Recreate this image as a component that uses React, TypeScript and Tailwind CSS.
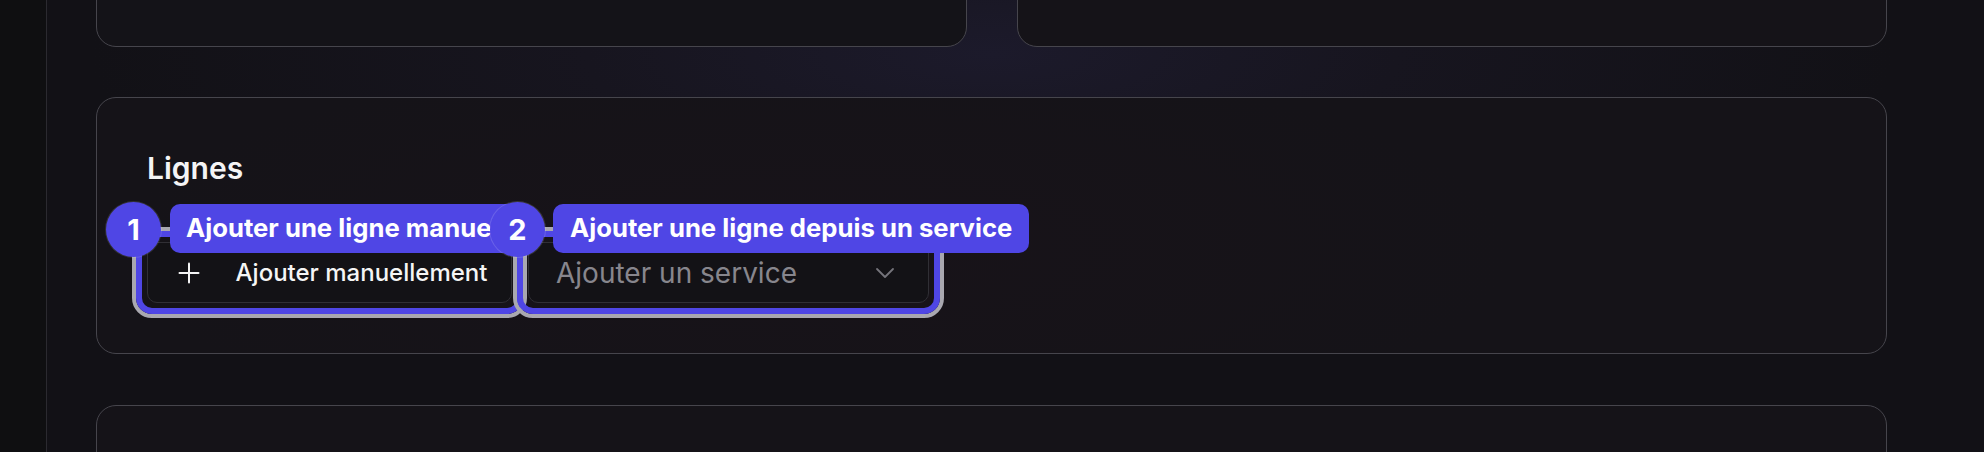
import React from "react";

function Plus() {
  return (
    <svg width="22" height="22" viewBox="0 0 22 22" fill="none" stroke="#f4f4f5" strokeWidth="2" strokeLinecap="round">
      <line x1="11" y1="1.5" x2="11" y2="20.5" />
      <line x1="1.5" y1="11" x2="20.5" y2="11" />
    </svg>
  );
}

function Chevron() {
  return (
    <svg width="20" height="12" viewBox="0 0 20 12" fill="none" stroke="#75747b" strokeWidth="1.8" strokeLinecap="round" strokeLinejoin="round">
      <polyline points="2,2 10,10 18,2" />
    </svg>
  );
}

function Highlight() {
  return (
    <div className="pointer-events-none absolute -inset-[15px] rounded-[20px] border-[4px] border-[#a9a8b0]">
      <div className="h-full w-full rounded-[16px] border-[6px] border-[#4f46e5]" />
    </div>
  );
}

export default function App() {
  return (
    <div className="relative flex h-[452px] w-full overflow-hidden bg-[#111014] bg-[radial-gradient(ellipse_900px_260px_at_50%_12%,#1c1a2b_0%,#17151f_45%,#121116_100%)] font-['Inter','Noto_Sans',sans-serif]">
      <aside className="h-full w-[47px] shrink-0 border-r border-[#2b2a30] bg-[#0f0f11]" />
      <main className="flex-1 pl-[49px] pr-[97px]">
        <div className="-mt-[153px] grid grid-cols-2 gap-[50px]">
          <div className="h-[200px] rounded-[20px] border border-[#46454c] bg-[#141318]" />
          <div className="h-[200px] rounded-[20px] border border-[#46454c] bg-[#151318]" />
        </div>

        <section className="mt-[50px] rounded-[20px] border border-[#46454c] bg-[#151318] bg-[radial-gradient(ellipse_700px_200px_at_40%_60%,#181319_0%,#151318_100%)] p-[50px]">
          <h2 className="text-[30px] font-semibold leading-[40px] text-[#f4f4f5]">Lignes</h2>
          <div className="mt-[54px] flex gap-[16px]">
            <div className="relative z-[1]">
              <button className="flex h-[61px] w-[365px] items-center justify-center gap-[36px] rounded-[10px] border border-[#302f35] bg-[#131216] pl-[6px] text-[24px] font-medium text-[#f5f5f5]">
                <Plus />
                <span>Ajouter manuellement</span>
              </button>
              <Highlight />
              <div className="absolute left-[23px] top-[-38px] flex h-[49px] w-[355px] items-center overflow-hidden whitespace-nowrap rounded-[10px] bg-[#4f46e5] pl-[16px] text-[25.7px] font-bold text-white">
                Ajouter une ligne manuellement
              </div>
              <div className="absolute left-[-41px] top-[-40px] flex h-[55px] w-[55px] items-center justify-center rounded-full bg-[#4f46e5] text-[29px] font-bold leading-none text-white shadow-[0_0_0_1px_rgba(255,255,255,0.12)]">
                1
              </div>
            </div>
            <div className="relative z-[2]">
              <button className="flex h-[61px] w-[401px] items-center justify-between rounded-[10px] border border-[#302f35] bg-[#131216] pl-[27px] pr-[33px] text-[28px] font-normal text-[#87868d]">
                <span>Ajouter un service</span>
                <Chevron />
              </button>
              <Highlight />
              <div className="absolute left-[25px] top-[-38px] flex h-[49px] items-center whitespace-nowrap rounded-[10px] bg-[#4f46e5] px-[17px] text-[25.7px] font-bold text-white">
                Ajouter une ligne depuis un service
              </div>
              <div className="absolute left-[-38px] top-[-40px] flex h-[55px] w-[55px] items-center justify-center rounded-full bg-[#4f46e5] text-[29px] font-bold leading-none text-white shadow-[0_0_0_1px_rgba(255,255,255,0.15)]">
                2
              </div>
            </div>
          </div>
        </section>

        <div className="mt-[51px] h-[200px] rounded-[20px] border border-[#46454c] bg-[#151318]" />
      </main>
    </div>
  );
}
